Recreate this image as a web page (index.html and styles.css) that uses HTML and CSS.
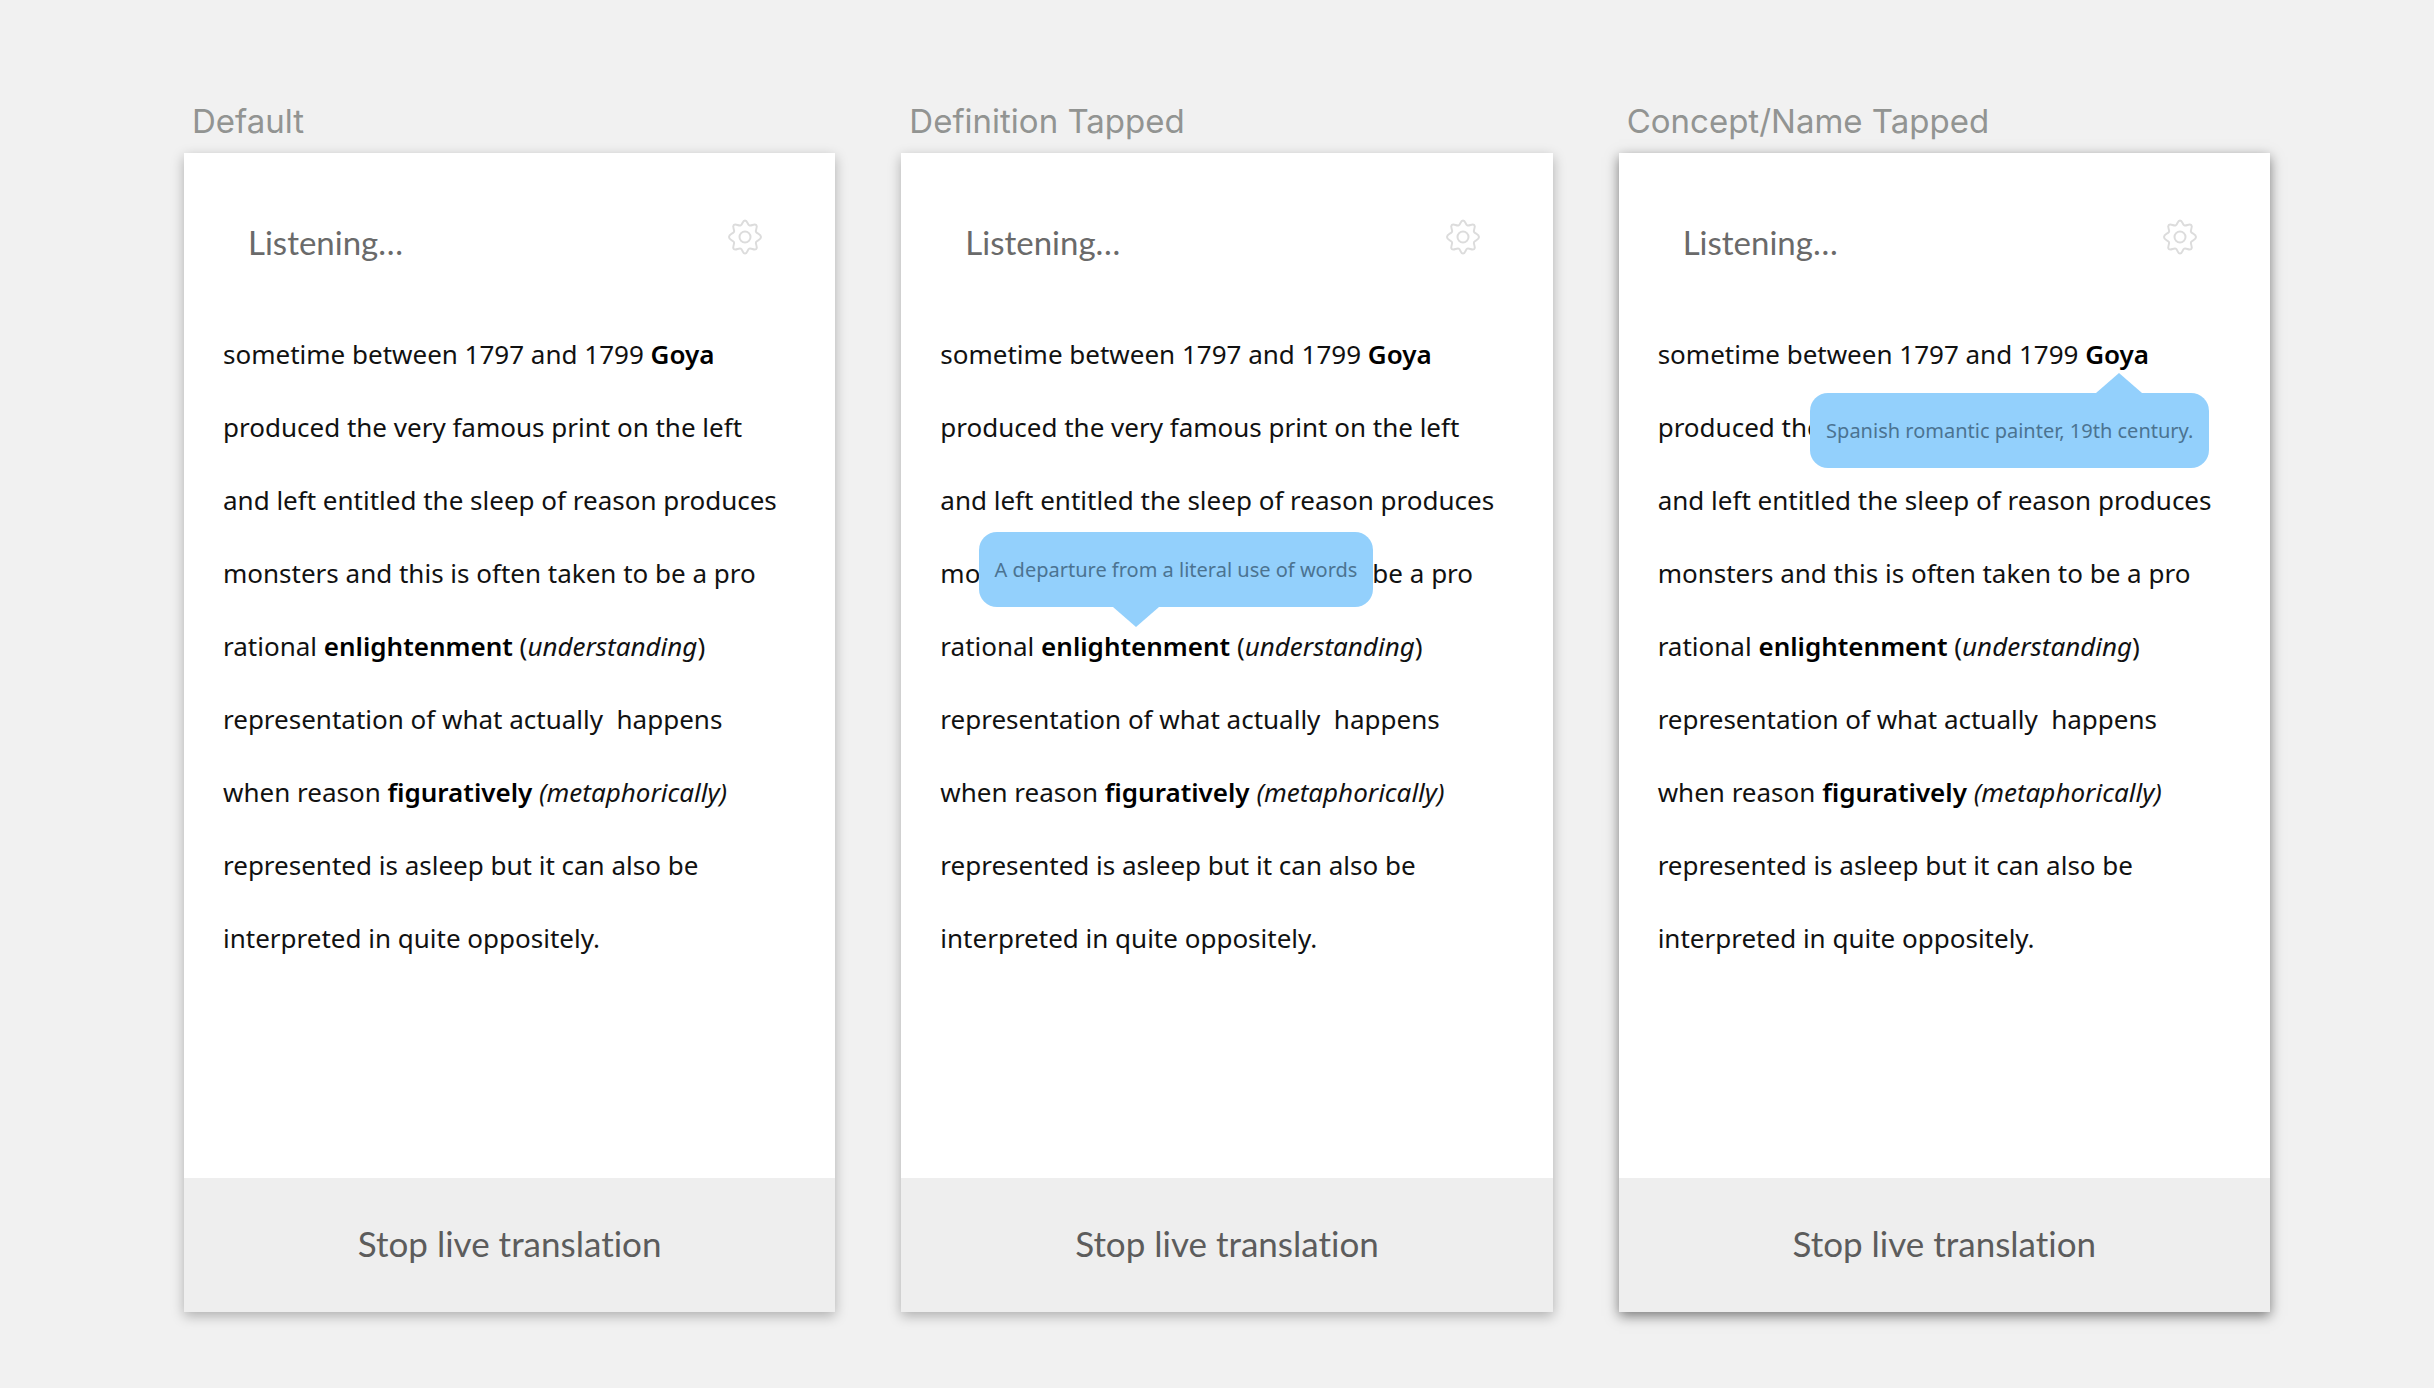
FILE: index.html
```
<!DOCTYPE html>
<html lang="en">
<head>
  <meta charset="UTF-8" />
  <meta name="viewport" content="width=device-width, initial-scale=1.0"/>
  <title>Live translation</title>
  <link rel="stylesheet" href="styles.css">
</head>
<body>

<svg class="defs" aria-hidden="true">
  <symbol id="gear" viewBox="0 0 36 36">
    <path d="M18 1.5c2.6 0 2.2 4 4.3 4.9 2.2.9 4.9-2.2 6.9-.4 2 2-1.1 4.6-.2 6.8.9 2.1 5 1.9 5 5.2s-4.1 3.100-5 5.200c-.9 2.200 2.200 4.800.2 6.800-2 1.800-4.700-1.300-6.900-.4-2.100.9-1.700 4.900-4.300 4.900s-2.200-4-4.300-4.900c-2.200-.9-4.900 2.200-6.900.4-2-2 1.100-4.600.2-6.800-.9-2.100-5-1.900-5-5.200s4.100-3.100 5-5.200c.9-2.200-2.200-4.800-.2-6.800 2-1.800 4.700 1.300 6.900.4 2.100-.9 1.700-4.900 4.300-4.900z"/>
    <circle cx="18" cy="18" r="5.5"/>
  </symbol>
</svg>

<main class="artboards">
  <section class="artboard">
    <h2 class="artboard-title">Default</h2>
    <div class="screen">
      <header class="screen-header">
        <span class="status">Listening…</span>
        <button class="settings" type="button" aria-label="Settings"><svg><use href="#gear"/></svg></button>
      </header>
      <p class="transcript">
        sometime between 1797 and 1799 <b class="term">Goya</b><br>
        produced the very famous print on the left<br>
        and left entitled the sleep of reason produces<br>
        monsters and this is often taken to be a pro<br>
        rational <b class="term">enlightenment</b> (<i>understanding</i>)<br>
        representation of what actually &nbsp;happens<br>
        when reason <b class="term">figuratively</b> <i>(metaphorically)</i><br>
        represented is asleep but it can also be<br>
        interpreted in quite oppositely.
      </p>
      <button class="stop" type="button">Stop live translation</button>
    </div>
  </section>

  <section class="artboard">
    <h2 class="artboard-title">Definition Tapped</h2>
    <div class="screen">
      <header class="screen-header">
        <span class="status">Listening…</span>
        <button class="settings" type="button" aria-label="Settings"><svg><use href="#gear"/></svg></button>
      </header>
      <p class="transcript">
        sometime between 1797 and 1799 <b class="term">Goya</b><br>
        produced the very famous print on the left<br>
        and left entitled the sleep of reason produces<br>
        monsters and this is often taken to be a pro<br>
        rational <b class="term">enlightenment<span class="tooltip tooltip-above" role="tooltip">A departure from a literal use of words</span></b> (<i>understanding</i>)<br>
        representation of what actually &nbsp;happens<br>
        when reason <b class="term">figuratively</b> <i>(metaphorically)</i><br>
        represented is asleep but it can also be<br>
        interpreted in quite oppositely.
      </p>
      <button class="stop" type="button">Stop live translation</button>
    </div>
  </section>

  <section class="artboard">
    <h2 class="artboard-title">Concept/Name Tapped</h2>
    <div class="screen selected">
      <header class="screen-header">
        <span class="status">Listening…</span>
        <button class="settings" type="button" aria-label="Settings"><svg><use href="#gear"/></svg></button>
      </header>
      <p class="transcript">
        sometime between 1797 and 1799 <b class="term">Goya<span class="tooltip tooltip-below" role="tooltip">Spanish romantic painter, 19th century.</span></b><br>
        produced the very famous print on the left<br>
        and left entitled the sleep of reason produces<br>
        monsters and this is often taken to be a pro<br>
        rational <b class="term">enlightenment</b> (<i>understanding</i>)<br>
        representation of what actually &nbsp;happens<br>
        when reason <b class="term">figuratively</b> <i>(metaphorically)</i><br>
        represented is asleep but it can also be<br>
        interpreted in quite oppositely.
      </p>
      <button class="stop" type="button">Stop live translation</button>
    </div>
  </section>
</main>

</body>
</html>
```
FILE: styles.css
```
* {
  box-sizing: border-box;
}

body {
  margin: 0;
  background-color: #f1f1f1;
  font-family: "Noto Sans", sans-serif;
}

.defs {
  display: none;
}

.artboards {
  display: grid;
  grid-template-columns: repeat(3, 1fr);
  gap: 66px;
  min-height: 100vh;
  padding: 101px 164px 76px 184px;
}

.artboard {
  display: flex;
  flex-direction: column;
}

.artboard-title {
  margin: 0;
  padding: 0 8px 12px;
  font-family: Inter, sans-serif;
  font-size: 33px;
  font-weight: 400;
  line-height: 40px;
  color: #929492;
}

.screen {
  flex: 1;
  display: flex;
  flex-direction: column;
  background: #fff;
  box-shadow: 0 4px 12px rgba(0, 0, 0, 0.28);
}

.screen.selected {
  box-shadow: 0 4px 12px rgba(0, 0, 0, 0.5);
}

.screen-header {
  display: flex;
  justify-content: space-between;
  padding: 66px 72px 0 64px;
}

.status {
  padding-top: 3px;
  font-family: Lato, sans-serif;
  font-size: 33px;
  line-height: 40px;
  color: #6a6a6a;
}

.settings {
  height: 36px;
  padding: 0;
  border: 0;
  background: none;
  cursor: pointer;
}

.settings svg {
  display: block;
  width: 36px;
  height: 36px;
  fill: none;
  stroke: #dcdcdc;
  stroke-width: 2;
  stroke-linejoin: round;
}

.transcript {
  flex: 1;
  margin: 0;
  padding: 56px 39px;
  font-size: 26px;
  line-height: 73px;
  color: #111;
  white-space: nowrap;
}

.term {
  position: relative;
  font-weight: 600;
  color: #000;
}

.tooltip {
  position: absolute;
  left: 50%;
  z-index: 1;
  padding: 0 16px;
  border-radius: 18px;
  background: #93d0fc;
  font-size: 20px;
  font-weight: 400;
  line-height: 75px;
  color: #4b7391;
}

.tooltip::after {
  content: "";
  position: absolute;
  border: 23px solid transparent;
}

.tooltip-above {
  bottom: 57px;
  margin-left: -157px;
}

.tooltip-above::after {
  top: 100%;
  left: 134px;
  border-top: 20px solid #93d0fc;
  border-bottom: 0;
}

.tooltip-below {
  top: 57px;
  margin-left: -307px;
}

.tooltip-below::after {
  bottom: 100%;
  left: 286px;
  border-bottom: 20px solid #93d0fc;
  border-top: 0;
}

.stop {
  height: 134px;
  padding: 0 0 4px;
  border: 0;
  background: #eee;
  font-family: Lato, sans-serif;
  font-size: 35px;
  font-variant-ligatures: none;
  color: #5c5c5c;
  cursor: pointer;
}
```
